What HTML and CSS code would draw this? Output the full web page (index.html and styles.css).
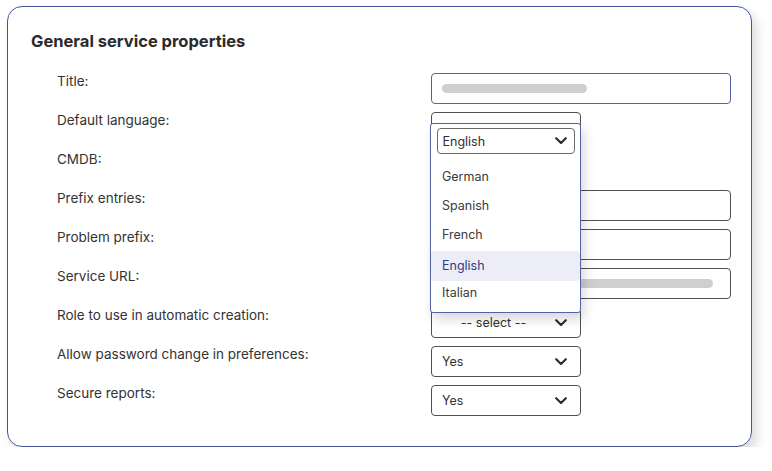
FILE: index.html
```html
<!DOCTYPE html>
<html lang="en">
<head>
    <meta charset="UTF-8">
    <meta name="viewport" content="width=device-width, initial-scale=1.0">
    <title>General service properties</title>
    <link rel="stylesheet" href="styles.css">
</head>
<body>
    <div class="card">
        <h2 class="card-title">General service properties</h2>

        <div class="form-grid">
            <div class="label">Title:</div>
            <div class="field field-focus wide"><span class="skeleton" style="width: 145px"></span></div>

            <div class="label">Default language:</div>
            <div class="select-wrap">
                <div class="field narrow"></div>
                <!-- lista desplegable abierta del idioma -->
                <div class="dropdown">
                    <div class="select-box">
                        <span>English</span>
                        <svg class="chevron" width="12" height="8" viewBox="0 0 12 8"><path d="M1.2 1.2 L6 6 L10.8 1.2" /></svg>
                    </div>
                    <ul class="options">
                        <li>German</li>
                        <li>Spanish</li>
                        <li>French</li>
                        <li class="active">English</li>
                        <li>Italian</li>
                    </ul>
                </div>
            </div>

            <div class="label">CMDB:</div>
            <div class="field narrow"></div>

            <div class="label">Prefix entries:</div>
            <div class="field wide"></div>

            <div class="label">Problem prefix:</div>
            <div class="field wide"></div>

            <div class="label">Service URL:</div>
            <div class="field wide"><span class="skeleton" style="width: 271px"></span></div>

            <div class="label">Role to use in automatic creation:</div>
            <div class="field narrow select center">
                <span>-- select --</span>
                <svg class="chevron" width="12" height="8" viewBox="0 0 12 8"><path d="M1.2 1.2 L6 6 L10.8 1.2" /></svg>
            </div>

            <div class="label">Allow password change in preferences:</div>
            <div class="field narrow select">
                <span>Yes</span>
                <svg class="chevron" width="12" height="8" viewBox="0 0 12 8"><path d="M1.2 1.2 L6 6 L10.8 1.2" /></svg>
            </div>

            <div class="label">Secure reports:</div>
            <div class="field narrow select">
                <span>Yes</span>
                <svg class="chevron" width="12" height="8" viewBox="0 0 12 8"><path d="M1.2 1.2 L6 6 L10.8 1.2" /></svg>
            </div>
        </div>
    </div>
</body>
</html>
```

FILE: styles.css
```css
body {
    margin: 0;
    background: #ffffff;
    font-family: Inter, "Noto Sans", sans-serif;
    color: #333333;
}

/* Tarjeta principal */
.card {
    margin: 6px 0 0 7px;
    width: 745px;
    box-sizing: border-box;
    border: 1.5px solid #46559a;
    border-radius: 15px;
    padding: 23px 20px 30px 23px;
    box-shadow: 5px 7px 12px rgba(0, 0, 0, 0.14);
}

.card-title {
    margin: 0;
    font-size: 16.5px;
    line-height: 22px;
    font-weight: 700;
    color: #2a2a2a;
}

/* Rejilla de etiquetas y campos */
.form-grid {
    display: grid;
    grid-template-columns: 374px 300px;
    row-gap: 8px;
    margin-top: 21px;
    padding-left: 26px;
}

.label {
    font-size: 13.5px;
    line-height: 16px;
    color: #333333;
}

.field {
    box-sizing: border-box;
    height: 31px;
    border: 1.5px solid #505050;
    border-radius: 4px;
    background: #ffffff;
    display: flex;
    align-items: center;
    padding: 0 10px;
    font-size: 12.5px;
    color: #333333;
}

.wide {
    width: 300px;
}

.narrow {
    width: 150px;
}

.field-focus {
    border-color: #5463a3;
}

.skeleton {
    display: block;
    height: 9px;
    border-radius: 5px;
    background: #cfcfcf;
}

.select {
    justify-content: space-between;
    padding-right: 13px;
}

.select.center span {
    flex: 1;
    text-align: center;
    padding-right: 10px;
}

.chevron {
    flex: none;
}

.chevron path {
    fill: none;
    stroke: #2f2f2f;
    stroke-width: 2.2;
    stroke-linecap: round;
    stroke-linejoin: round;
}

/* Desplegable abierto */
.select-wrap {
    position: relative;
    z-index: 2;
}

.dropdown {
    position: absolute;
    top: 11px;
    left: -1px;
    width: 151px;
    height: 190px;
    box-sizing: border-box;
    background: #ffffff;
    border: 1.5px solid #5463a3;
    border-radius: 3px;
    padding: 4px 5px 0 5.5px;
    box-shadow: 3px 6px 12px rgba(0, 0, 0, 0.16);
}

.select-box {
    box-sizing: border-box;
    height: 26px;
    border: 1.5px solid #6a6a6a;
    border-radius: 4px;
    display: flex;
    align-items: center;
    justify-content: space-between;
    padding: 0 7px 0 5px;
    font-size: 12.5px;
    color: #2f2f2f;
}

.options {
    list-style: none;
    margin: 8px -5px 0 -5.5px;
    padding: 0;
}

.options li {
    height: 29px;
    line-height: 29px;
    padding-left: 11px;
    font-size: 12.5px;
    color: #3a3a3a;
}

.options li.active {
    margin-top: 2px;
    height: 30px;
    line-height: 30px;
    background: #ecedf7;
    border-radius: 4px;
    color: #2e3b86;
}

.options li:last-child {
    height: 24px;
    line-height: 24px;
}
```
